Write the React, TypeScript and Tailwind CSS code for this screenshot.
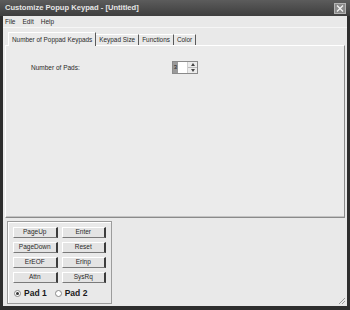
import React from "react";

const tabs = ["Number of Poppad Keypads", "Keypad Size", "Functions", "Color"];
const keys = [
  ["PageUp", "Enter"],
  ["PageDown", "Reset"],
  ["ErEOF", "Erinp"],
  ["Attn", "SysRq"],
];

function KeyButton({ label }: { label: string }) {
  return (
    <div className="w-[46px] h-[11px] flex items-center justify-center bg-[#e4e4e4] border-t border-l border-t-white border-l-white border-b border-b-[#7a7a7a] border-r-2 border-r-[#3c3c3c] text-[6.5px] leading-none text-[#2a2a2a]">
      {label}
    </div>
  );
}

function Radio({ checked, label }: { checked?: boolean; label: string }) {
  return (
    <div className="flex items-center gap-[3px]">
      <div className="w-[7px] h-[7px] rounded-full bg-white border border-[#888] flex items-center justify-center">
        {checked && <div className="w-[3px] h-[3px] rounded-full bg-[#333]" />}
      </div>
      <span className="text-[8.5px] font-bold leading-none text-[#1a1a1a]">{label}</span>
    </div>
  );
}

export default function App() {
  return (
    <div
      className="w-[350px] h-[310px] flex flex-col bg-[#2e2e2e] px-[3px] pb-[4px]"
      style={{ fontFamily: '"Liberation Sans", Arial, sans-serif' }}
    >
      {/* title bar */}
      <div className="h-[16px] flex items-center justify-between bg-gradient-to-b from-[#5c5c5c] to-[#3e3e3e] -mx-[3px] pl-[5px] pr-[4px]">
        <span className="text-[7.6px] font-bold text-[#e6e6e6]">
          Customize Popup Keypad - [Untitled]
        </span>
        <div className="w-[12px] h-[11px] bg-[#8a8a8a] border border-[#b4b4b4] flex items-center justify-center">
          <svg width="8" height="7" viewBox="0 0 8 7">
            <path d="M1 0.5 L7 6.5 M7 0.5 L1 6.5" stroke="#f4f4f4" strokeWidth="1.3" />
          </svg>
        </div>
      </div>

      {/* client area */}
      <div className="flex-1 flex flex-col bg-[#e9e9e9]">
        {/* menu */}
        <div className="h-[12px] flex items-center gap-[7px] pl-[2px] text-[6.5px] text-[#2a2a2a] border-b border-b-[#f6f6f6]">
          <span>File</span>
          <span>Edit</span>
          <span>Help</span>
        </div>

        {/* tabs */}
        <div className="mt-[4px] ml-[5px] flex items-end h-[13px] relative z-10">
          {tabs.map((t, i) =>
            i === 0 ? (
              <div
                key={t}
                className="h-[14px] -mb-[1px] px-[3px] flex items-center bg-[#ebebeb] border-t border-l border-t-white border-l-white border-r border-r-[#5a5a5a] text-[6.4px] text-[#2a2a2a]"
              >
                {t}
              </div>
            ) : (
              <div
                key={t}
                className="h-[11px] px-[3px] flex items-center bg-[#e9e9e9] border-t border-t-white border-r border-r-[#5a5a5a] text-[6.4px] text-[#2a2a2a]"
              >
                {t}
              </div>
            )
          )}
        </div>

        {/* tab panel */}
        <div className="ml-[2px] mr-[2px] h-[173px] bg-[#ebebeb] border-t border-l border-t-white border-l-white border-r border-b border-r-[#8a8a8a] border-b-[#8a8a8a] shadow-[inset_0_-1px_0_#c4c4c4]">
          <div className="flex items-center mt-[15px] ml-[25px]">
            <span className="w-[141px] text-[6.5px] text-[#2a2a2a]">Number of Pads:</span>
            <div className="w-[26px] h-[13px] flex bg-white border border-[#8a8a8a]">
              <div className="w-[5px] h-full bg-[#9a9a9a] text-[6px] leading-[11px] text-[#222] text-center">3</div>
              <div className="flex-1" />
              <div className="w-[10px] flex flex-col border-l border-l-[#cfcfcf]">
                <div className="flex-1 flex items-center justify-center bg-[#ececec] border-b border-b-[#bbb]">
                  <svg width="4" height="3" viewBox="0 0 4 3"><path d="M0 3 L2 0 L4 3Z" fill="#444" /></svg>
                </div>
                <div className="flex-1 flex items-center justify-center bg-[#ececec]">
                  <svg width="4" height="3" viewBox="0 0 4 3"><path d="M0 0 L2 3 L4 0Z" fill="#444" /></svg>
                </div>
              </div>
            </div>
          </div>
        </div>

        {/* bottom area */}
        <div className="flex-1 relative">
          <div className="ml-[4px] mt-[3px] w-[105px] h-[83px] border border-[#9c9c9c] shadow-[inset_1px_1px_0_#fff] px-[5px] pt-[5px]">
            <div className="flex flex-col gap-[4px]">
              {keys.map((row) => (
                <div key={row[0]} className="flex gap-[4px]">
                  <KeyButton label={row[0]} />
                  <KeyButton label={row[1]} />
                </div>
              ))}
            </div>
            <div className="flex items-center gap-[8px] mt-[6px] ml-[1px]">
              <Radio checked label="Pad 1" />
              <Radio label="Pad 2" />
            </div>
          </div>
          <svg className="absolute right-[1px] bottom-[1px]" width="8" height="8" viewBox="0 0 8 8">
            <path d="M7 1 L1 7 M7 4 L4 7" stroke="#9a9a9a" strokeWidth="1" />
          </svg>
        </div>
      </div>
    </div>
  );
}
